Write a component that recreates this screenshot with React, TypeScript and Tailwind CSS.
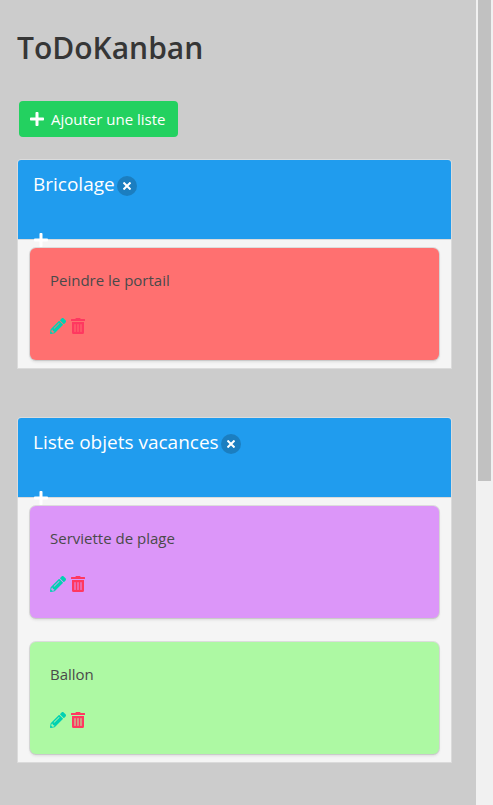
import { FaPencilAlt, FaPlus, FaTrashAlt } from "react-icons/fa";

type Card = { title: string; color: string };
type List = { title: string; cards: Card[] };

const lists: List[] = [
  {
    title: "Bricolage",
    cards: [{ title: "Peindre le portail", color: "bg-[#ff7070]" }],
  },
  {
    title: "Liste objets vacances",
    cards: [
      { title: "Serviette de plage", color: "bg-[#dc96f9]" },
      { title: "Ballon", color: "bg-[#adf9a3]" },
    ],
  },
];

function TaskCard({ title, color }: Card) {
  return (
    <li
      className={`h-28 rounded-md px-5 pt-5 shadow-[0_2px_3px_rgba(10,10,10,0.1),0_0_0_1px_rgba(10,10,10,0.1)] ${color}`}
    >
      <p className="text-[15px] leading-6 text-[#4a4a4a]">{title}</p>
      <div className="mt-[26px] flex gap-1">
        <button type="button" aria-label="Modifier" className="text-[#00d1b2]">
          <FaPencilAlt size={16} />
        </button>
        <button type="button" aria-label="Supprimer" className="text-[#ff3860]">
          <FaTrashAlt size={16} />
        </button>
      </div>
    </li>
  );
}

function Panel({ title, cards }: List) {
  return (
    <section className="rounded-t border border-[#dbdbdb] bg-[#f5f5f5]">
      <header className="h-20 rounded-t-[3px] border-b border-[#dbdbdb] bg-[#209cee] px-[15px] pt-2 text-white">
        <div className="flex items-center gap-0.5">
          <h2 className="text-[19px] leading-8">{title}</h2>
          <button
            type="button"
            aria-label="Supprimer la liste"
            className="mt-1 flex size-5 items-center justify-center rounded-full bg-[#0a0a0a]/20"
          >
            <svg viewBox="0 0 8 8" className="size-2" stroke="currentColor" strokeWidth="2">
              <path d="M.5.5l7 7M7.5.5l-7 7" />
            </svg>
          </button>
        </div>
        <button type="button" aria-label="Ajouter une carte" className="mt-8 block">
          <FaPlus size={16} />
        </button>
      </header>
      <ul className="flex flex-col gap-6 px-3 py-2">
        {cards.map((card) => (
          <TaskCard key={card.title} {...card} />
        ))}
      </ul>
    </section>
  );
}

export default function App() {
  return (
    <div className="flex min-h-screen bg-[#cccccc] font-['Open_Sans','Noto_Sans',sans-serif]">
      <main className="min-w-0 flex-1 pt-7 pr-6 pb-9 pl-[17px]">
        <h1 className="text-[30px] leading-10 font-semibold text-[#363636]">ToDoKanban</h1>
        <button
          type="button"
          className="mt-[33px] ml-[2px] flex h-9 items-center gap-1.5 rounded bg-[#23d160] pr-3 pl-2.5 text-[15px] text-white"
        >
          <FaPlus size={16} />
          Ajouter une liste
        </button>
        <div className="mt-[22px] flex flex-col gap-12">
          {lists.map((list) => (
            <Panel key={list.title} {...list} />
          ))}
        </div>
      </main>
      <div aria-hidden="true" className="w-[17px] bg-[#f1f1f1] px-[2px]">
        <div className="h-[481px] bg-[#c1c1c1]" />
      </div>
    </div>
  );
}
